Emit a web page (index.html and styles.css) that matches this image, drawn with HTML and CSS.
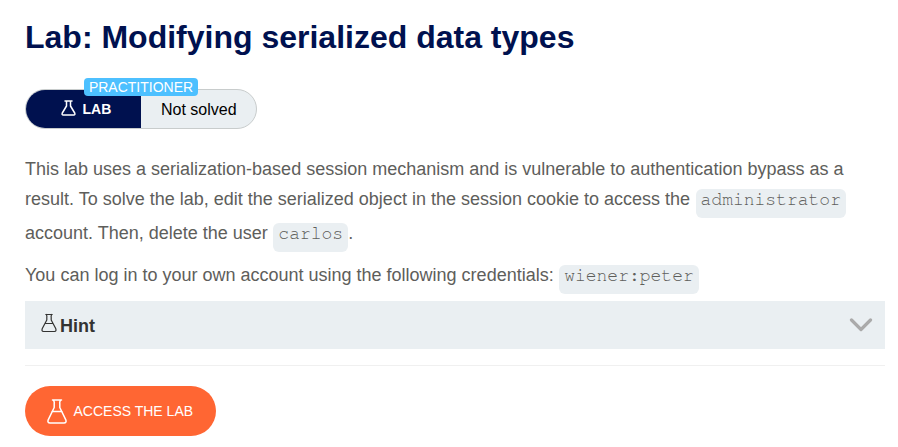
FILE: index.html
```html
<!DOCTYPE html>
<html lang="en">
<head>
<meta charset="utf-8">
<title>Lab: Modifying serialized data types</title>
<link rel="stylesheet" href="styles.css">
</head>
<body>
<main>
  <h1>Lab: Modifying serialized data types</h1>
  <div class="status">
    <span class="level">PRACTITIONER</span>
    <div class="status-lab">
      <svg class="flask-small" viewBox="0 0 15 16"><path d="M4 1h7M5.500 1v5L1.300 13Q.5 15 2.300 15h10.400q1.800 0 1-2L9.500 6V1"/></svg>
      <span>LAB</span>
    </div>
    <div class="status-result">Not solved</div>
  </div>
  <p class="intro">This lab uses a serialization-based session mechanism and is vulnerable to authentication bypass as a result. To solve the lab, edit the serialized object in the session cookie to access the <code>administrator</code> account. Then, delete the user <code>carlos</code>.</p>
  <p class="login">You can log in to your own account using the following credentials: <code>wiener:peter</code></p>
  <div class="hint">
    <svg class="flask-hint" viewBox="0 0 16 20"><path d="M4.800 1.500h6.400M5.300 1.500Q6.200 3 5.800 4.500V7L1.300 15.500Q.3 18.500 2.500 18.500h11q2.200 0 1.200-3L10.200 7V4.500Q9.800 3 10.700 1.500M4 10.500h8"/></svg>
    <span>Hint</span>
    <svg class="chevron" viewBox="0 0 24 14"><path d="M2.500 2l9.500 9.500L21.500 2"/></svg>
  </div>
  <hr>
  <a class="access">
    <svg class="flask-large" viewBox="0 0 20 25"><path d="M5.500 1h9M6.200 1q1.400 1.500 1 3.500v4L1.200 20.800Q.2 24 3 24h14q2.800 0 1.800-3.200L12.800 8.500v-4Q12.400 2.500 13.800 1M5 12.500h10"/></svg>
    <span>ACCESS THE LAB</span>
  </a>
</main>
</body>
</html>
```

FILE: styles.css
```css
body {
  margin: 0;
  background: #fff;
  color: #5e5e5b;
  font-family: "Liberation Sans", Arial, sans-serif;
}
main {
  width: 860px;
  padding: 17px 13px 0 25px;
}
h1 {
  margin: 0;
  color: #00114f;
  font-size: 32px;
  line-height: 40px;
}
svg {
  flex: none;
  fill: none;
  stroke: currentColor;
  stroke-linejoin: round;
  stroke-linecap: round;
}
.status {
  position: relative;
  display: flex;
  box-sizing: border-box;
  width: 232px;
  height: 40px;
  margin-top: 32px;
  border: 1px solid #c8cccc;
  border-radius: 20px;
  background: #eaeff2;
}
.level {
  position: absolute;
  left: 58px;
  top: -12px;
  width: 114px;
  height: 18px;
  border-radius: 4px;
  background: #4dc0ff;
  color: #fff;
  font-size: 14px;
  line-height: 19px;
  text-align: center;
}
.status-lab {
  display: flex;
  align-items: center;
  gap: 7px;
  box-sizing: border-box;
  width: 115px;
  padding-left: 34.5px;
  border-radius: 19px 0 0 19px;
  background: #00114f;
  color: #fff;
  font-size: 14px;
  font-weight: bold;
}
.flask-small { width: 15px; height: 16px; margin-top: -2px; stroke-width: 1.5; }
.status-result {
  padding-left: 20px;
  color: #000;
  font-size: 16px;
  line-height: 39px;
}
p {
  margin: 0;
  font-size: 18px;
  line-height: 30px;
}
.intro { margin-top: 25px; }
.login { margin-top: 8px; }
code {
  display: inline-block;
  box-sizing: border-box;
  height: 29px;
  margin: 5px 0 0 .5px;
  padding: 0 5px;
  border-radius: 6px;
  background: #eaeff2;
  font-family: "Nimbus Mono PS", FreeMono, "Liberation Mono", monospace;
  font-size: 18px;
  line-height: 23px;
  vertical-align: top;
}
.hint {
  display: flex;
  align-items: center;
  height: 48px;
  margin-top: 7px;
  padding: 0 12px 0 15.5px;
  background: #eaeff2;
  color: #333332;
  font-size: 18px;
  font-weight: bold;
}
.hint span { margin: 2px 0 0 3.5px; }
.flask-hint { width: 16px; height: 20px; margin-top: -4px; stroke-width: 1.2; }
.chevron { width: 24px; height: 14px; margin-left: auto; color: #aaa; stroke-width: 3.2; }
hr {
  height: 1px;
  margin: 16px 0 20px;
  border: 0;
  background: #f0f0f0;
}
.access {
  display: flex;
  align-items: center;
  box-sizing: border-box;
  width: 191px;
  height: 50px;
  padding-left: 21.5px;
  gap: 7px;
  border-radius: 25px;
  background: #ff6633;
  color: #fff;
  font-size: 14px;
}
.flask-large { width: 20px; height: 25px; stroke-width: 1.5; }
```
